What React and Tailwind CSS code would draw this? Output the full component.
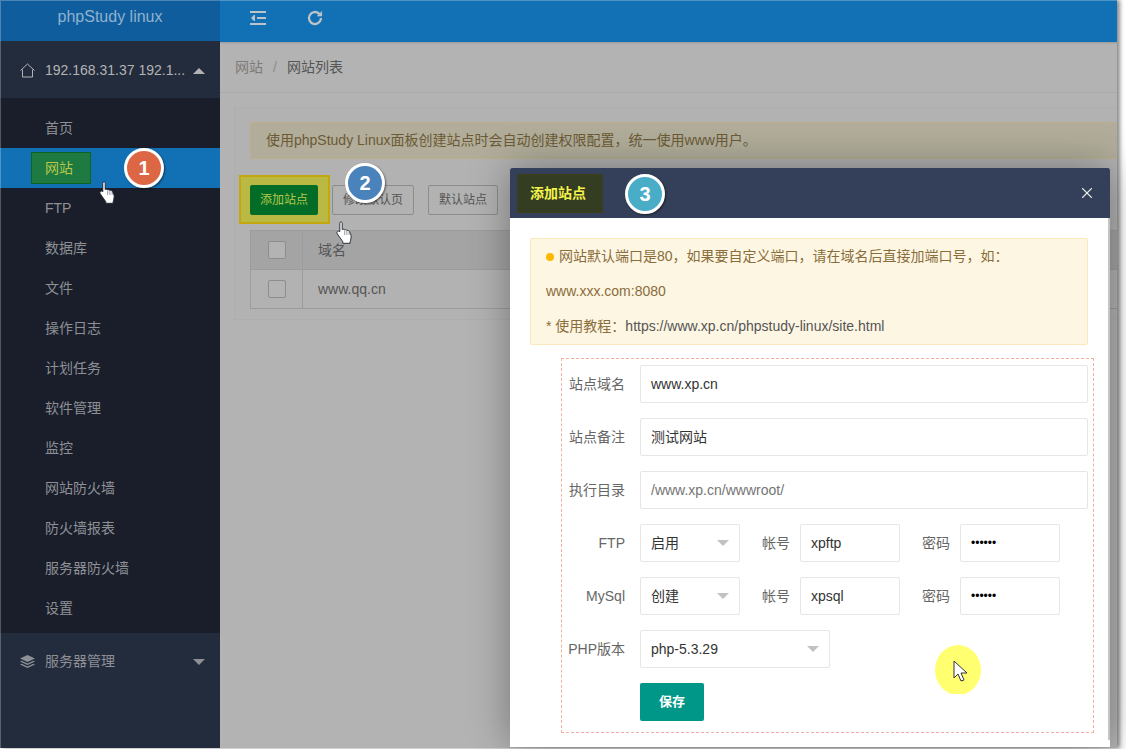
import { X } from 'lucide-react';

const menu = ['首页', '网站', 'FTP', '数据库', '文件', '操作日志', '计划任务', '软件管理', '监控', '网站防火墙', '防火墙报表', '服务器防火墙', '设置'];

function Badge({ n, className }) {
  return (
    <div className={`absolute flex h-[40px] w-[40px] items-center justify-center rounded-full border-[3px] border-white text-[20px] font-bold text-white shadow-[1px_1px_2px_rgba(0,0,0,0.5)] ${className}`}>
      {n}
    </div>
  );
}

function Hand({ className }) {
  return (
    <svg className={`absolute ${className}`} width="17" height="23" viewBox="0 0 17 23">
      <path
        d="M4.200 1.200c.9-.7 2-.1 2 1v6.300c1-.5 2-.4 2.500.4.900-.4 1.800-.2 2.200.6.900-.4 1.900 0 2.300.8l1.500 2.800c.4 1 .5 2 .4 3l-.4 3c-.1.600-.3 1.100-.6 1.600v1.600H6.800v-1.600L1.400 13c-.7-1-.6-2 .2-2.600.7-.5 1.600-.3 2.200.4V2.400c0-.5.100-.9.400-1.200z"
        fill="#fff"
        stroke="#1c2130"
        strokeWidth="0.9"
        strokeLinejoin="round"
      />
      <path d="M8.700 9.500v4.500M10.900 10v4M13.200 10.800V14" stroke="#6b7080" strokeWidth="0.7" fill="none" />
    </svg>
  );
}

function Select({ value, className }) {
  return (
    <div className={`flex h-[38px] items-center justify-between rounded-[2px] border border-[#e6e6e6] bg-white pl-[10px] pr-[10px] text-[#333] ${className}`}>
      <span>{value}</span>
      <span className="h-0 w-0 border-x-[6px] border-t-[6px] border-x-transparent border-t-[#c2c2c2]" />
    </div>
  );
}

function Input({ value, className = '', muted }) {
  return (
    <div className={`flex h-[38px] items-center rounded-[2px] border border-[#e6e6e6] bg-white pl-[10px] ${muted ? 'text-[#757575]' : 'text-[#333]'} ${className}`}>
      {value}
    </div>
  );
}

function Label({ children }) {
  return <div className="mr-[15px] w-[63px] shrink-0 whitespace-nowrap text-right text-[#666]">{children}</div>;
}

function SmallLabel({ children }) {
  return <div className="mr-[10px] w-[50px] shrink-0 text-right text-[#666]">{children}</div>;
}

function Account({ label, state, user }) {
  return (
    <div className="flex items-center">
      <Label>{label}</Label>
      <Select value={state} className="w-[100px]" />
      <SmallLabel>帐号</SmallLabel>
      <Input value={user} className="w-[100px]" />
      <SmallLabel>密码</SmallLabel>
      <Input value="••••••" className="w-[100px] text-[12px] text-black" />
    </div>
  );
}

function Dialog() {
  return (
    <div className="absolute left-[510px] top-[168px] h-[579px] w-[600px] rounded-t-[2px] bg-white shadow-[0_0_40px_rgba(0,0,0,0.35)]">
      <div className="flex h-[50px] items-center justify-between rounded-t-[2px] bg-[#343f59] pl-[7px] pr-[14px]">
        <div className="flex h-[39px] w-[86px] items-center border border-[#3c3f18] bg-[#343c22] pl-[12px] font-bold text-[#f3f34c]">
          添加站点
        </div>
        <X size={18} strokeWidth={1.5} className="text-[#e8e8e8]" />
      </div>
      <div className="pl-[20px] pr-[22px] pt-[20px]">
        <div className="mb-[13px] rounded-[2px] border border-[#fbe9bd] bg-[#fdf6e3] px-[15px] leading-[35px] text-[#8a6d3b]">
          <div className="flex items-center">
            <span className="mr-[5px] h-[8px] w-[8px] rounded-full bg-[#ffb800]" />
            网站默认端口是80，如果要自定义端口，请在域名后直接加端口号，如：
          </div>
          <div>www.xxx.com:8080</div>
          <div>
            * 使用教程：<span className="text-[#555]">https://www.xp.cn/phpstudy-linux/site.html</span>
          </div>
        </div>
        <div className="-mr-[5px] ml-[31px] flex h-[375px] w-[533px] flex-col gap-[15px] border border-dashed border-[#f2b0a0] pr-[4px] pt-[6px]">
          <div className="flex items-center">
            <Label>站点域名</Label>
            <Input value="www.xp.cn" className="w-[448px]" />
          </div>
          <div className="flex items-center">
            <Label>站点备注</Label>
            <Input value="测试网站" className="w-[448px]" />
          </div>
          <div className="flex items-center">
            <Label>执行目录</Label>
            <Input value="/www.xp.cn/wwwroot/" muted className="w-[448px]" />
          </div>
          <Account label="FTP" state="启用" user="xpftp" />
          <Account label="MySql" state="创建" user="xpsql" />
          <div className="flex items-center">
            <Label>PHP版本</Label>
            <Select value="php-5.3.29" className="w-[190px]" />
          </div>
          <div className="pl-[78px]">
            <button className="flex h-[38px] w-[64px] items-center justify-center rounded-[2px] bg-[#009688] text-[13px] font-bold text-white">保存</button>
          </div>
        </div>
      </div>
      <div className="absolute right-0 top-[50px] h-[522px] w-[2px] bg-[#c4c4c4]" />
      <svg className="absolute left-[424px] top-[476px]" width="48" height="50" viewBox="0 0 48 50">
        <ellipse cx="24" cy="26" rx="23" ry="25" fill="#ffff70" />
        <path d="M20 17v17l4-4 3 7 3-1-3-7h6z" fill="#fff" stroke="#333" strokeWidth="1" strokeLinejoin="round" />
      </svg>
    </div>
  );
}

export default function App() {
  return (
    <div className="relative h-[749px] w-[1126px] overflow-hidden bg-white text-[14px] font-['Liberation_Sans','Noto_Sans_CJK_SC',sans-serif]">
      <div className="flex h-[748px] w-[1117px] shadow-[3px_0_4px_rgba(0,0,0,0.45)]">
        <aside className="flex w-[220px] shrink-0 flex-col bg-[#232c3d] text-[#8e9096]">
          <div className="flex h-[41px] shrink-0 items-start justify-center bg-[#0f5d9d] pt-[5px] text-[16px] text-[#8fb3cf]">
            phpStudy linux
          </div>
          <div className="flex h-[57px] shrink-0 items-center pl-[20px] pr-[15px] pt-[2px] text-[#b3b3b3]">
            <svg width="15" height="15" viewBox="0 0 15 15" fill="none" stroke="#b3b3b3" strokeWidth="1">
              <path d="M.5 7.500 7.500 1l7 6.500M2.500 6.500v7.500h10V6.500" />
            </svg>
            <span className="ml-[10px] flex-1 whitespace-nowrap">192.168.31.37 192.1...</span>
            <span className="h-0 w-0 border-x-[6px] border-b-[6px] border-x-transparent border-b-[#b3b3b3]" />
          </div>
          <nav className="h-[535px] shrink-0 bg-[#191e2a] pt-[10px]">
            {menu.map((item) => (
              <div key={item} className={`flex h-[40px] items-center pl-[45px] ${item === '网站' ? 'bg-[#1271b5]' : ''}`}>
                {item === '网站' ? (
                  <span className="-ml-[14px] flex h-[32px] w-[60px] items-center border border-[#0e6420] bg-[#1f7a42] pl-[13px] text-[#b7c64a]">{item}</span>
                ) : (
                  item
                )}
              </div>
            ))}
          </nav>
          <div className="flex h-[57px] shrink-0 items-center pl-[20px] pr-[15px]">
            <svg width="15" height="15" viewBox="0 0 15 15" fill="#8e9096">
              <path d="M7.500 1 15 4.500 7.500 8 0 4.500z" />
              <path d="M1.500 6.800 7.500 9.600l6-2.800 1.500.8-7.500 3.500L0 7.600zM1.500 9.800l6 2.800 6-2.800 1.500.8L7.500 14 0 10.600z" />
            </svg>
            <span className="ml-[10px] flex-1">服务器管理</span>
            <span className="h-0 w-0 border-x-[6px] border-t-[6px] border-x-transparent border-t-[#8e9096]" />
          </div>
        </aside>
        <main className="min-w-0 flex-1 overflow-hidden bg-[#b3b3b3]">
          <div className="flex h-[42px] items-center gap-[41px] bg-[#1271b5] pb-[7px] pl-[30px] shadow-[0_1px_2px_rgba(0,0,0,0.15)]">
            <svg width="16" height="14" viewBox="0 0 16 14" fill="none" stroke="#bcc3c9" strokeWidth="2">
              <path d="M0 1h16M7 7h9M0 13h16" />
              <path d="M4.500 4 1.500 7l3 3z" fill="#bcc3c9" strokeWidth="1" />
            </svg>
            <svg width="16" height="16" viewBox="0 0 24 24" fill="none" stroke="#bcc3c9" strokeWidth="3.4">
              <path d="M21 12a9 9 0 1 1-3-6.700L21 8" />
              <path d="M22 2v7h-7" fill="#bcc3c9" strokeWidth="1" />
            </svg>
          </div>
          <div className="flex h-[51px] items-center border-b border-[#a9a9a9] pl-[15px] pt-[1px] text-[#666]">
            <span className="text-[#7d7a77]">网站</span>
            <span className="mx-[10px] text-[#8b8b8b]">/</span>
            <span className="text-[#555]">网站列表</span>
          </div>
          <div className="ml-[14px] mt-[14px] h-[213px] w-[900px] border border-[#aeaeae] bg-[#b2b2b2] pl-[15px] pt-[14px]">
            <div className="flex h-[37px] items-center rounded-[2px] border border-[#bcae8b] bg-[#b1ad9a] pl-[15px] text-[#6b5a35]">
              使用phpStudy Linux面板创建站点时会自动创建权限配置，统一使用www用户。
            </div>
            <div className="mt-[26px] flex h-[30px] items-center text-[12px] text-[#555]">
              <button className="flex h-[30px] w-[68px] items-center justify-center rounded-[2px] bg-[#036d27] text-[#b5c84c]">添加站点</button>
              <button className="ml-[14px] h-[30px] w-[82px] rounded-[2px] border border-[#8c8c8c]">修改默认页</button>
              <button className="ml-[14px] h-[30px] w-[70px] rounded-[2px] border border-[#8c8c8c]">默认站点</button>
            </div>
            <div className="mt-[15px] border border-[#9c9c9c] text-[#555]">
              <div className="flex h-[39px] items-center border-b border-[#9c9c9c] bg-[#a4a4a4]">
                <div className="flex h-full w-[52px] items-center justify-center border-r border-[#9c9c9c]">
                  <span className="h-[18px] w-[18px] rounded-[2px] border border-[#8d8d8d] bg-[#b3b3b3]" />
                </div>
                <div className="pl-[15px]">域名</div>
              </div>
              <div className="flex h-[38px] items-center">
                <div className="flex h-full w-[52px] items-center justify-center border-r border-[#9c9c9c]">
                  <span className="h-[18px] w-[18px] rounded-[2px] border border-[#8d8d8d] bg-[#b3b3b3]" />
                </div>
                <div className="pl-[15px]">www.qq.cn</div>
              </div>
            </div>
          </div>
        </main>
      </div>
      <div className="pointer-events-none absolute left-0 top-0 h-[748px] w-[1117px] border-l border-t border-white/25" />
      <div className="absolute left-[239px] top-[175px] flex h-[49px] w-[91px] items-center border-2 border-[#c4a60f] bg-[#b9b944] pl-[9px]">
        <button className="flex h-[30px] w-[68px] items-center justify-center rounded-[2px] bg-[#036d27] text-[12px] text-[#b5c84c]">添加站点</button>
      </div>
      <Hand className="left-[99px] top-[181px]" />
      <Hand className="left-[336px] top-[221px]" />
      <Badge n="1" className="left-[124px] top-[148px] bg-[#dd6744]" />
      <Badge n="2" className="left-[345px] top-[163px] bg-[#4a82bc]" />
      <Dialog />
      <Badge n="3" className="left-[625px] top-[174px] bg-[#4aadc8]" />
    </div>
  );
}
